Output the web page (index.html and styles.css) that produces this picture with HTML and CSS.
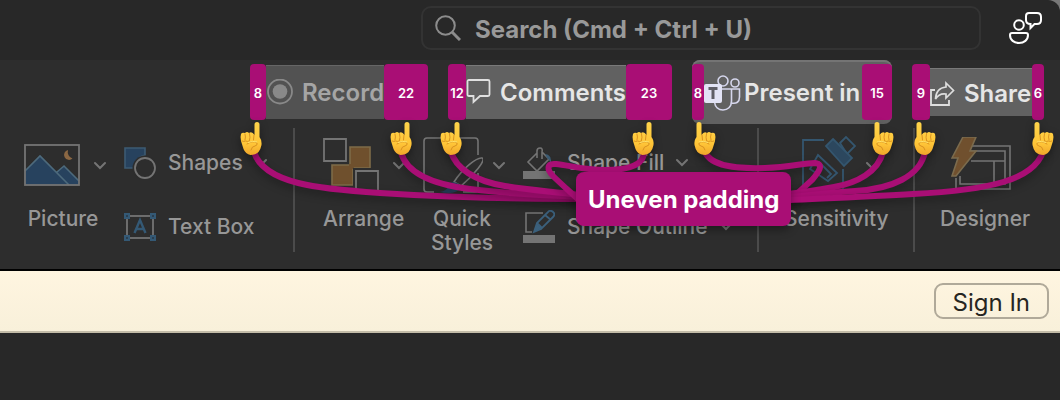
FILE: index.html
```html
<!DOCTYPE html>
<html lang="en">
<head>
<meta charset="utf-8">
<title>Uneven padding</title>
<link rel="stylesheet" href="styles.css">
</head>
<body>
<div class="window">
<header class="titlebar">
  <label class="search">
    <svg class="search-icon" viewBox="0 0 26 26" width="26" height="26"><circle cx="10.500" cy="10.500" r="9.300"/><path d="M17 17l8 8" stroke-width="3"/></svg>
    <input class="search-input" type="search" aria-label="Search" placeholder="Search (Cmd + Ctrl + U)">
  </label>
  <button class="account" aria-label="Feedback">
    <svg viewBox="0 0 34 34" width="34" height="34"><circle cx="11" cy="14" r="4.800"/><path d="M4 22h14q2 0 2 2c0 5-4 8-9 8s-9-3-9-8q0-2 2-2z"/><path d="M21 2h8q4 0 4 4v3q0 4-4 4h-2.500l-4 4v-4q-4.500 0-4.500-4V5q0-3 3-3z"/></svg>
  </button>
</header>

<nav class="actions">
  <button class="action muted">
    <span class="pad pad-16">8</span>
    <span class="body body-record"><svg viewBox="0 0 28 28" width="28" height="28"><circle cx="14" cy="12.500" r="12" fill="none" stroke="#898989" stroke-width="1.800"/><circle cx="14" cy="12.500" r="7.300" fill="#898989"/></svg><span>Record</span></span>
    <span class="pad pad-44">22</span>
  </button>
  <button class="action">
    <span class="pad pad-18">12</span>
    <span class="body body-comments"><svg viewBox="0 0 26 28" width="26" height="28"><path d="M3 1h19q1.500 0 1.500 1.500v13q0 1.500-1.500 1.500h-8l-6.500 6v-6H3q-1.500 0-1.500-1.500v-13Q1.500 1 3 1z" fill="none" stroke="#e0e0e0" stroke-width="1.800"/></svg><span>Comments</span></span>
    <span class="pad pad-46">23</span>
  </button>
  <button class="action raised">
    <span class="pad pad-12">8</span>
    <span class="body body-present"><svg viewBox="0 0 38 38" width="38" height="38"><g fill="none" stroke="#d5d6ec" stroke-width="1.600"><circle cx="19" cy="7" r="5"/><circle cx="31" cy="9" r="4"/><path d="M18 15h9.500v12c0 6-4 9-8.500 9s-8-3-8.500-8M28 15h7.500v8c0 5-3 7-8 6"/></g><rect y="10" width="18" height="19" rx="2" fill="#e2e3f5"/><path d="M4.500 14.500h9M9 14.500v10.500" fill="none" stroke="#5e5e66" stroke-width="3"/></svg><span>Present in</span></span>
    <span class="pad pad-30">15</span>
  </button>
  <button class="action">
    <span class="pad pad-18">9</span>
    <span class="body body-share"><svg viewBox="0 0 26 28" width="26" height="28"><path d="M5 10H1v15h18v-5" fill="none" stroke="#dedede" stroke-width="1.800"/><path d="M16 3l7.500 7.500L16 18v-4q-7-1-10.500 5Q6 8 16 7z" fill="none" stroke="#dedede" stroke-width="1.700"/></svg><span>Share</span></span>
    <span class="pad pad-12">6</span>
  </button>
</nav>

<main class="ribbon">
  <button class="tool">
    <span class="tool-icons">
      <svg viewBox="0 0 56 42" width="56" height="42"><path d="M1 27L16 12l29 29H1z" fill="#27425e"/><path d="M32 28l8-6 15 15v4H45z" fill="#27425e"/><path d="M1 27L16 12l29 29M33 28l7-6 15 15" fill="none" stroke="#4d6a7c" stroke-width="1.600"/><path d="M44 6a5 5 0 1 0 4.500 8.500A7 7 0 0 1 44 6z" fill="#8b6743"/><rect x="1" y="1" width="54" height="40" fill="none" stroke="#747474" stroke-width="1.800"/></svg>
      <svg class="chevron" viewBox="0 0 12 10" width="12" height="10"><path d="M1 3l5 5 5-5"/></svg>
    </span>
    <span class="tool-label">Picture</span>
  </button>

  <div class="stack stack-insert">
    <button class="row">
      <svg viewBox="0 0 32 34" width="32" height="34"><path d="M1 2h20v7q-9 2-11 13H1z" fill="#27425e" stroke="#3d5b73" stroke-width="1.600"/><circle cx="21" cy="22" r="12.500" fill="#2d2d2d"/><circle cx="21" cy="22" r="10" fill="none" stroke="#747474" stroke-width="1.800"/></svg>
      <span class="row-label">Shapes</span>
      <svg class="chevron" viewBox="0 0 12 10" width="12" height="10"><path d="M1 2l5 5 5-5"/></svg>
    </button>
    <button class="row">
      <svg viewBox="0 0 32 30" width="32" height="30"><rect x="3" y="4" width="26" height="22" fill="none" stroke="#747474" stroke-width="1.800"/><path d="M10.500 21L16 8l5.500 13M12.500 17h7" fill="none" stroke="#345975" stroke-width="2.400"/><g fill="#2b3f50" stroke="#345975" stroke-width="2"><path d="M1 2h4v4H1zM27 2h4v4h-4zM1 24h4v4H1zM27 24h4v4h-4z"/></g></svg>
      <span class="row-label">Text Box</span>
    </button>
  </div>

  <hr class="divider">

  <button class="tool tool-arrange">
    <span class="tool-icons">
      <svg viewBox="0 0 56 54" width="56" height="54"><g fill="#6f502d" stroke="#7d6b48" stroke-width="1.600"><path d="M27 9h20v21H27zM9 27h21v20H9z"/></g><path d="M26 26h5v5h-5z" fill="#6f502d"/><g fill="#2d2d2d"><path d="M0 0h26v26H0zM30 30h26v24H30z"/></g><g fill="none" stroke="#747474" stroke-width="1.800"><path d="M1 1h22v22H1zM33 54V33h22v21"/></g></svg>
      <svg class="chevron" viewBox="0 0 12 10" width="12" height="10"><path d="M1 3l5 5 5-5"/></svg>
    </span>
    <span class="tool-label">Arrange</span>
  </button>

  <button class="tool">
    <span class="tool-icons">
      <svg viewBox="0 0 60 56" width="60" height="56"><path d="M11 55H4q-3 0-3-3V4q0-3 3-3h48q3 0 3 3v14M55 36v16q0 3-3 3H40" fill="none" stroke="#747474" stroke-width="1.600"/><path d="M31 45C40 31 54 20 59 21s-8 17-21 28z" fill="none" stroke="#747474" stroke-width="1.600"/><path d="M17 55c9-1 7-8 13-10q8 1 7 6c-2 5-11 6-20 4z" fill="#27425e"/></svg>
      <svg class="chevron" viewBox="0 0 12 10" width="12" height="10"><path d="M1 3l5 5 5-5"/></svg>
    </span>
    <span class="tool-label">Quick<br>Styles</span>
  </button>

  <div class="stack stack-format">
    <button class="row">
      <svg viewBox="0 0 32 34" width="32" height="34"><path d="M14 7L5 16l9 9 12-12-7-7M14 12V5q0-3 3-3t2 4v7" fill="none" stroke="#747474" stroke-width="1.600"/><path d="M22 8q7 0 6 11-1-5-4-7z" fill="#3b5b73"/><rect y="25" width="32" height="8" fill="#747474"/></svg>
      <span class="row-label">Shape Fill</span>
      <svg class="chevron" viewBox="0 0 12 10" width="12" height="10"><path d="M1 2l5 5 5-5"/></svg>
    </button>
    <button class="row">
      <svg viewBox="0 0 32 34" width="32" height="34"><path d="M20 3H3v19h6" fill="none" stroke="#747474" stroke-width="1.600"/><path d="M11 22l3-9L26 1q3-1 5 2 1 2-1 4L18 19zM22 5l6 5M14 13l5 5" fill="#2d2d2d" stroke="#3b607c" stroke-width="1.800"/><path d="M11 22l3-8 5 4z" fill="#3b607c"/><rect y="25" width="32" height="8" fill="#747474"/></svg>
      <span class="row-label">Shape Outline</span>
      <svg class="chevron" viewBox="0 0 12 10" width="12" height="10"><path d="M1 2l5 5 5-5"/></svg>
    </button>
  </div>

  <hr class="divider">

  <button class="tool tool-sensitivity">
    <span class="tool-icons">
      <svg viewBox="0 0 54 60" width="54" height="60"><g fill="none" stroke="#34566f" stroke-width="1.800"><path d="M22 5H1v53h40V34M8 34l8-14 19 18-9 8zM14 30l3-3 12 12-4 4"/><path d="M38 8l6-6 9 9-8 8z"/></g><path d="M31 4l19 19-8 8-18-20z" fill="#2c475e" stroke="#34566f" stroke-width="1.800"/></svg>
      <svg class="chevron" viewBox="0 0 12 10" width="12" height="10"><path d="M1 3l5 5 5-5"/></svg>
    </span>
    <span class="tool-label">Sensitivity</span>
  </button>

  <hr class="divider">

  <button class="tool tool-designer">
    <span class="tool-icons">
      <svg viewBox="0 0 60 56" width="60" height="56"><g fill="none" stroke="#747474" stroke-width="1.600"><path d="M21 9h38v43H5V41M18 14h36v33H9v-8M20 24h34M43 24v23"/></g><path d="M12 0h13l-6 14h6L5 39H1l6-18H1z" fill="#70502e" stroke="#7b6b4d" stroke-width="1.600"/></svg>
    </span>
    <span class="tool-label">Designer</span>
  </button>
</main>

<section class="banner"><button class="sign-in">Sign In</button></section>

<div class="annotations">
  <svg class="callouts" viewBox="0 0 1060 270" width="1060" height="270" aria-hidden="true">
    <defs>
      <linearGradient id="skin" x1="0" y1="0" x2="0" y2="1"><stop offset="0" stop-color="#ffd44b"/><stop offset=".65" stop-color="#ffc638"/><stop offset="1" stop-color="#f0a62a"/></linearGradient>
      <symbol id="hand" viewBox="0 0 24 36" overflow="visible">
        <path d="M14.500 14V3.500q0-2.500 2.500-2.500t2.500 2.500V16q2.500 3 2 8-1 5-3 7-3 3-8 3-5-1-7-6L1 20q-1-4 0-7 1-2 4-1 2-2 4 0 3-2 5.500 2z" fill="url(#skin)"/>
        <path d="M5 13q1 3 0 6M9.500 12.500q1 4 0 7M14 14l-.500 5M2 20q2 1 3.500 0 2 1 4 0M7 23q6-4 10-1 1 2-2 3-3 0-4 4" fill="none" stroke="#d58c1e" stroke-width=".9" stroke-linecap="round"/>
        <path d="M8 21.500q5-2 9-.500" fill="none" stroke="#ffe36e" stroke-width="1"/>
      </symbol>
    </defs>
    <g class="wires">
      <path d="M254 152C264 184 320 189 380 193S520 199 580 199"/>
      <path d="M401 152C406 172 430 184 470 189S545 195 580 197"/>
      <path d="M451 152C456 168 474 181 505 186S550 191 580 195"/>
      <path d="M644 152C644 164 632 170 605 170C583 170 568 165 556 164C546 163 547 170 553 176S568 190 580 201"/>
      <path d="M705 152C711 166 735 169 765 168C790 167 804 163 815 163C825 164 818 173 812 180L788 202"/>
      <path d="M883 152C878 172 857 183 834 187S808 192 788 194"/>
      <path d="M925 152C920 176 892 189 855 191S810 196 788 197"/>
      <path d="M1043 152C1033 180 990 190 913 194S820 199 788 200"/>
    </g>
    <g class="hands">
      <use href="#hand" x="240" y="121" width="24" height="36"/>
      <use href="#hand" x="390" y="121" width="24" height="36"/>
      <use href="#hand" x="440" y="121" width="24" height="36"/>
      <use href="#hand" x="632" y="121" width="24" height="36"/>
      <g transform="scale(-1 1)">
        <use href="#hand" x="-716" y="121" width="24" height="36"/>
        <use href="#hand" x="-894" y="121" width="24" height="36"/>
        <use href="#hand" x="-936" y="121" width="24" height="36"/>
        <use href="#hand" x="-1054" y="121" width="24" height="36"/>
      </g>
    </g>
  </svg>
  <strong class="note">Uneven padding</strong>
</div>
</div>
</body>
</html>
```
FILE: styles.css
```css
* { box-sizing: border-box; }
body {
  margin: 0;
  background: #282828;
  font-family: Inter, "Liberation Sans", sans-serif;
}
button {
  margin: 0;
  padding: 0;
  border: 0;
  background: none;
  color: inherit;
  font: inherit;
}
svg { flex: none; }
.window { position: relative; background: linear-gradient(#777 0 20px, #282828 20px); }

.titlebar {
  display: flex;
  align-items: flex-start;
  justify-content: flex-end;
  height: 60px;
  padding: 6px 18px 0 0;
  background: #282828;
  border-top-right-radius: 12px;
}
.search {
  display: flex;
  align-items: center;
  gap: 14px;
  width: 560px;
  height: 44px;
  padding: 0 12px;
  border: 2px solid #333;
  border-radius: 10px;
}
.search-icon { fill: none; stroke: #8c8c8c; stroke-width: 2; }
.search-input {
  flex: 1;
  min-width: 0;
  padding: 4px 0 0;
  border: 0;
  outline: 0;
  background: none;
  color: #999;
  font: 700 24px/30px Inter, sans-serif;
}
.search-input::placeholder { color: #999; opacity: 1; }
.account { display: flex; margin: 5px 0 0 27px; }
.account svg { fill: none; stroke: #fff; stroke-width: 2; }

.actions {
  display: flex;
  align-items: center;
  justify-content: flex-end;
  gap: 20px;
  height: 64px;
  padding-right: 16px;
  background: #2d2d2d;
}
.action {
  display: flex;
  align-items: center;
  color: #e6e6e6;
  font-size: 24px;
  line-height: 30px;
  font-weight: 600;
}
.pad {
  display: flex;
  align-items: center;
  justify-content: center;
  height: 56px;
  padding-top: 2px;
  border-radius: 4px;
  background: #a90e75;
  color: #fff;
  font-size: 13px;
  font-weight: 600;
}
.pad-12 { width: 12px; }
.pad-16 { width: 16px; }
.pad-18 { width: 18px; }
.pad-30 { width: 30px; }
.pad-44 { width: 44px; }
.pad-46 { width: 46px; }
.body {
  display: flex;
  align-items: center;
  height: 54px;
  overflow: hidden;
  border-top: 1px solid #7a7a7a;
  background: #616161;
  white-space: nowrap;
}
.body-record { width: 118px; gap: 8px; background: #525252; border-color: #666; }
.muted { color: #a5a5a5; }
.body-comments { width: 160px; gap: 8px; }
.body-present { width: 158px; gap: 2px; padding-top: 2px; border: 0; }
.body-share { width: 102px; height: 48px; gap: 8px; padding-top: 2px; }
.raised { height: 64px; border-radius: 8px; background: #616161; box-shadow: inset 0 2px #747474; }
.raised .body { background: none; }

.ribbon {
  display: flex;
  align-items: flex-start;
  gap: 18px;
  padding: 4px 24px 10px;
  border-bottom: 2px solid #000;
  background: #2d2d2d;
  color: #979797;
  font-size: 21px;
  line-height: 24px;
  font-weight: 500;
}
.tool { flex: none; width: 82px; padding-top: 5px; }
.tool-icons {
  display: flex;
  align-items: center;
  justify-content: space-between;
  height: 64px;
  margin-bottom: 10px;
}
.tool-label { display: block; padding-right: 4px; white-space: nowrap; }
.tool-arrange { width: 85px; padding-left: 3px; }
.tool-arrange .tool-label { padding-right: 8px; }
.tool-sensitivity { width: 104px; }
.tool-sensitivity .tool-icons { padding: 0 10px 0 18px; }
.tool-sensitivity .tool-label, .tool-designer .tool-label { padding: 0; }
.tool-designer { width: 88px; }
.tool-designer .tool-icons { padding-left: 11px; }
.chevron { fill: none; stroke: #747474; stroke-width: 2; stroke-linecap: round; }
.stack { flex: none; padding-top: 3px; }
.stack-insert { width: 144px; }
.stack-format { width: 209px; }
.row { display: flex; align-items: center; gap: 12px; height: 64px; white-space: nowrap; }
.divider { flex: none; width: 2px; height: 124px; margin: 0 7px; border: 0; background: #4b4b4b; }

.banner {
  display: flex;
  justify-content: flex-end;
  padding: 12px 11px;
  border-bottom: 2px solid #c3bca8;
  background: linear-gradient(#fff5e0, #f8f0da);
}
.sign-in {
  height: 36px;
  padding: 3px 17px 0;
  border: 2px solid #b0a999;
  border-radius: 9px;
  color: #262521;
  font-size: 24px;
  line-height: 30px;
}

.annotations {
  position: absolute;
  top: 0;
  right: 0;
  width: 1060px;
  height: 270px;
  pointer-events: none;
}
.callouts { display: block; }
.wires path {
  fill: none;
  stroke: #a90e75;
  stroke-width: 6;
  filter: drop-shadow(0 4px 4px rgba(0, 0, 0, .3));
}
.hands { filter: drop-shadow(0 3px 4px rgba(0, 0, 0, .4)); }
.note {
  position: absolute;
  top: 172px;
  left: 576px;
  padding: 13px 12px 11px;
  border-radius: 8px;
  background: #a90e75;
  box-shadow: 0 4px 8px rgba(0, 0, 0, .35);
  color: #fff;
  font-size: 24px;
  line-height: 30px;
  font-weight: 700;
  white-space: nowrap;
}
```
